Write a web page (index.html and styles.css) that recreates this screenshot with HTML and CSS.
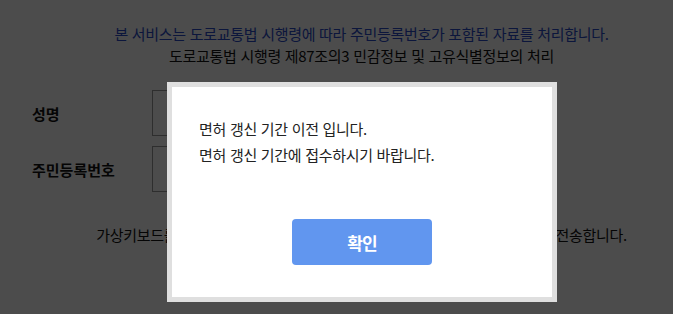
FILE: index.html
```html
<!DOCTYPE html>
<html lang="ko">
<head>
  <meta charset="UTF-8">
  <meta name="viewport" content="width=device-width, initial-scale=1.0">
  <title>본인확인</title>
  <link rel="stylesheet" href="styles.css">
</head>
<body>
  <div class="container">
    <div class="notice">
      <p class="notice-main">본 서비스는 도로교통법 시행령에 따라 주민등록번호가 포함된 자료를 처리합니다.</p>
      <p class="notice-sub">도로교통법 시행령 제87조의3 민감정보 및 고유식별정보의 처리</p>
    </div>

    <div class="form">
      <div class="form-row">
        <label for="name">성명</label>
        <input type="text" id="name">
      </div>
      <div class="form-row">
        <label for="rrn">주민등록번호</label>
        <input type="text" id="rrn">
      </div>
    </div>

    <p class="keypad-info">가상키보드를 사용하시면 입력하시는 개인정보가 모두 암호화되어 안전하게 전송합니다.</p>
  </div>

  <div class="overlay">
    <div class="modal">
      <div class="modal-msg">
        <p>면허 갱신 기간 이전 입니다.</p>
        <p>면허 갱신 기간에 접수하시기 바랍니다.</p>
      </div>
      <div class="modal-actions">
        <button class="btn-ok" onclick="closeModal()">확인</button>
      </div>
    </div>
  </div>

  <script>
    function closeModal() {
      document.querySelector('.overlay').style.display = 'none';
    }
  </script>
</body>
</html>
```

FILE: styles.css
```css
* { box-sizing: border-box; }
body {
  margin: 0;
  font-family: "Noto Sans CJK KR", "Noto Sans", sans-serif;
  background: #fff;
  color: #111;
}
p { margin: 0; }
.container {
  padding: 23px 0 0 50px;
}
.notice {
  text-align: center;
  font-size: 15px;
  letter-spacing: -0.3px;
  line-height: 22px;
}
.notice-main { color: #2b4bc8; }
.notice-sub { color: #111; }
.form {
  margin-top: 23px;
  margin-left: -18px;
  display: flex;
  flex-direction: column;
  gap: 10px;
}
.form-row {
  display: flex;
  align-items: center;
}
.form-row label {
  width: 120px;
  font-size: 15px;
  font-weight: 700;
}
.form-row input {
  width: 320px;
  height: 46px;
  border: 1px solid #999;
  background: #fff;
}
.keypad-info {
  margin-top: 32px;
  text-align: center;
  font-size: 15px;
  letter-spacing: -0.3px;
}
.overlay {
  position: fixed;
  inset: 0;
  background: rgba(0, 0, 0, 0.7);
  display: flex;
  justify-content: center;
  align-items: flex-start;
  padding: 82px 0 0 51px;
}
.modal {
  width: 390px;
  height: 220px;
  background: #fff;
  border: 5px solid #dfdfdf;
  display: flex;
  flex-direction: column;
}
.modal-msg {
  padding: 29px 27px 0;
  font-size: 15px;
  letter-spacing: -0.3px;
  line-height: 26px;
  color: #222;
}
.modal-actions {
  margin-top: auto;
  padding-bottom: 32px;
  display: flex;
  justify-content: center;
}
.btn-ok {
  width: 140px;
  height: 46px;
  border: none;
  border-radius: 4px;
  background: #6196ef;
  color: #fff;
  font-family: inherit;
  font-size: 17px;
  font-weight: 700;
  letter-spacing: -1px;
  cursor: pointer;
}
```
